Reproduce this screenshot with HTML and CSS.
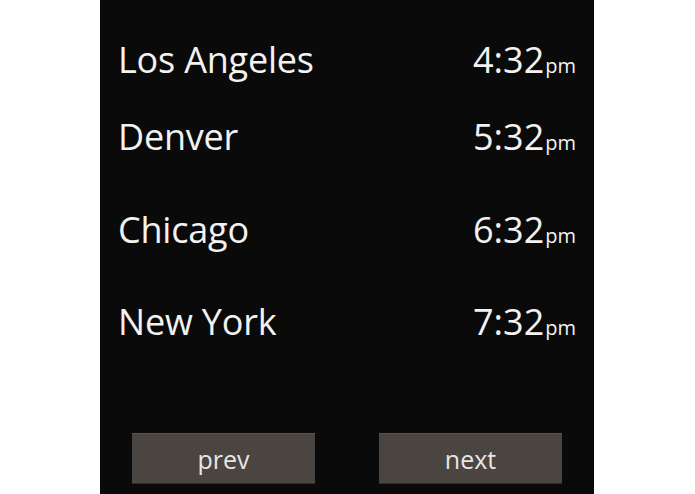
FILE: index.html
```html
<!DOCTYPE html>
<html>
<head>
<meta charset="utf-8">
<link rel="stylesheet" href="styles.css">
</head>
<body>
<div class="screen">
  <div class="list">
    <div class="row r1"><span class="city">Los Angeles</span><span class="time">4:32<small>pm</small></span></div>
    <div class="row r2"><span class="city">Denver</span><span class="time">5:32<small>pm</small></span></div>
    <div class="row r3"><span class="city">Chicago</span><span class="time">6:32<small>pm</small></span></div>
    <div class="row r4"><span class="city">New York</span><span class="time">7:32<small>pm</small></span></div>
  </div>
  <div class="buttons">
    <button class="btn">prev</button>
    <button class="btn">next</button>
  </div>
</div>
</body>
</html>
```
FILE: styles.css
```css
html, body {
  margin: 0;
  padding: 0;
  background: #ffffff;
}
body {
  width: 695px;
  height: 494px;
  display: flex;
  font-family: "Open Sans", "DejaVu Sans", sans-serif;
}
.screen {
  width: 494px;
  height: 494px;
  background: #0a0a0a;
  display: flex;
  flex-direction: column;
  margin-left: 100px;
}
.list {
  flex: 1;
  padding: 0 18px 0 18px;
}
.row {
  display: flex;
  justify-content: space-between;
  align-items: baseline;
  color: #f2f2f2;
  font-size: 36px;
  line-height: 36px;
  height: 36px;
}
.city {
  letter-spacing: -0.2px;
}
.r1 { margin-top: 42px; }
.r2 { margin-top: 41px; }
.r3 { margin-top: 57px; }
.r4 { margin-top: 56px; }
.time small {
  font-size: 20px;
  line-height: 20px;
  margin-left: 1px;
}
.buttons {
  display: flex;
  justify-content: space-between;
  padding: 0 32px 10px 32px;
}
.btn {
  width: 183px;
  height: 51px;
  background: #4b4541;
  border: none;
  border-top: 1px solid #5a5450;
  border-bottom: 1px solid #2e2a28;
  color: #e6e6e6;
  font-family: "Open Sans", "DejaVu Sans", sans-serif;
  font-size: 25px;
  padding: 2px 0 0 0;
  line-height: 47px;
}
```
